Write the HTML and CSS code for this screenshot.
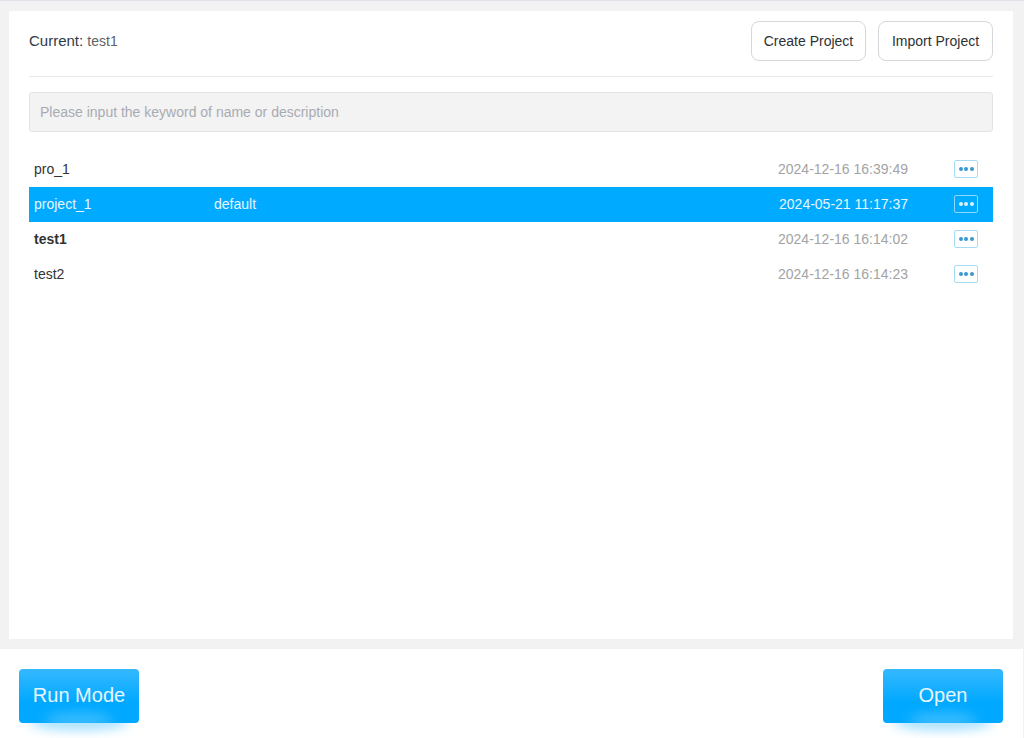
FILE: index.html
```html
<!DOCTYPE html>
<html lang="en">
<head>
  <meta charset="UTF-8" />
  <title>Projects</title>
  <link rel="stylesheet" href="styles.css">
</head>
<body>

<div class="page">
  <div class="panel">
    <div class="top">
      <div class="current">Current: <span>test1</span></div>
      <div class="top-btns">
        <button class="btn" type="button">Create Project</button>
        <button class="btn" type="button">Import Project</button>
      </div>
    </div>

    <input class="search" type="text" placeholder="Please input the keyword of name or description" />

    <ul class="list">
      <li class="row">
        <span class="name">pro_1</span>
        <span class="desc"></span>
        <span class="time">2024-12-16 16:39:49</span>
        <span class="more"><i></i><i></i><i></i></span>
      </li>
      <li class="row selected">
        <span class="name">project_1</span>
        <span class="desc">default</span>
        <span class="time">2024-05-21 11:17:37</span>
        <span class="more"><i></i><i></i><i></i></span>
      </li>
      <li class="row active">
        <span class="name">test1</span>
        <span class="desc"></span>
        <span class="time">2024-12-16 16:14:02</span>
        <span class="more"><i></i><i></i><i></i></span>
      </li>
      <li class="row">
        <span class="name">test2</span>
        <span class="desc"></span>
        <span class="time">2024-12-16 16:14:23</span>
        <span class="more"><i></i><i></i><i></i></span>
      </li>
    </ul>
  </div>

  <div class="footer">
    <button class="big-btn" type="button">Run Mode</button>
    <button class="big-btn" type="button">Open</button>
  </div>
</div>

</body>
</html>
```

FILE: styles.css
```css
html, body {
  margin: 0;
  height: 100%;
}
body {
  font-family: "Liberation Sans", Arial, sans-serif;
  font-size: 14px;
  background: #f2f2f2;
  color: #333;
  overflow: hidden;
}
.page {
  height: 738px;
  box-sizing: border-box;
  border-top: 1px solid #e0e2ea;
  display: flex;
  flex-direction: column;
}
.panel {
  height: 628px;
  box-sizing: border-box;
  margin: 10px 11px 0 9px;
  padding: 10px 20px 0;
  background: #fff;
}
.top {
  display: flex;
  justify-content: space-between;
  align-items: center;
  padding-bottom: 15px;
  border-bottom: 1px solid #e9e9ec;
}
.current {
  padding-bottom: 2px;
  font-size: 15px;
  color: #303a46;
}
.current span {
  font-size: 14px;
  color: #606266;
}
.top-btns {
  display: flex;
  gap: 12px;
}
.btn {
  height: 40px;
  padding: 0;
  width: 115px;
  background: #fff;
  border: 1px solid #d5d7dc;
  border-radius: 8px;
  font-family: inherit;
  font-size: 14px;
  color: #303133;
}
.search {
  display: block;
  width: 100%;
  height: 40px;
  box-sizing: border-box;
  margin-top: 15px;
  padding: 0 10px;
  background: #f3f3f4;
  border: 1px solid #e2e3e6;
  border-radius: 3px;
  font-family: inherit;
  font-size: 14px;
}
.search::placeholder {
  color: #a8abb2;
  opacity: 1;
}
.list {
  list-style: none;
  margin: 20px 0 0;
  padding: 0;
}
.row {
  display: flex;
  align-items: center;
  height: 35px;
  box-sizing: border-box;
  padding: 0 15px 2px 5px;
}
.name {
  width: 180px;
}
.desc {
  flex: 1;
}
.time {
  color: #a3a3a3;
  margin-right: 46px;
}
.more {
  width: 24px;
  height: 18px;
  box-sizing: border-box;
  display: flex;
  align-items: center;
  justify-content: center;
  gap: 1.5px;
  border: 1px solid #a6dcf5;
  border-radius: 2px;
  background: #fff;
}
.more i {
  width: 4px;
  height: 4px;
  border-radius: 50%;
  background: #3a97cf;
}
.selected {
  background: #00aaff;
  color: #e8f7ff;
}
.selected .time {
  color: #e8f7ff;
}
.selected .more {
  background: transparent;
  border-color: #8fd8ff;
}
.selected .more i {
  background: #d8f2ff;
}
.active .name {
  font-weight: bold;
}
.footer {
  flex: 1;
  margin-top: 10px;
  margin-right: 1px;
  background: #fff;
  display: flex;
  justify-content: space-between;
  align-items: flex-start;
  padding: 20px 20px 0 19px;
  overflow: hidden;
}
.big-btn {
  position: relative;
  z-index: 0;
  width: 120px;
  height: 54px;
  padding: 0 0 2px;
  border: none;
  border-radius: 4px;
  background: linear-gradient(to bottom, #35b8ff, #00a9ff 62%);
  font-family: inherit;
  font-size: 20px;
  color: #e6f7ff;
}
/* glow under the button */
.big-btn::after {
  content: "";
  position: absolute;
  z-index: -1;
  left: 10px;
  right: 10px;
  top: 44px;
  height: 17px;
  border-radius: 50%;
  background: rgba(0, 170, 255, 0.36);
  filter: blur(6px);
}
/* light patch across the bottom edge */
.big-btn::before {
  content: "";
  position: absolute;
  left: 26px;
  right: 26px;
  top: 44px;
  height: 14px;
  border-radius: 50%;
  background: rgba(190, 232, 255, 0.32);
  filter: blur(6px);
}
```
